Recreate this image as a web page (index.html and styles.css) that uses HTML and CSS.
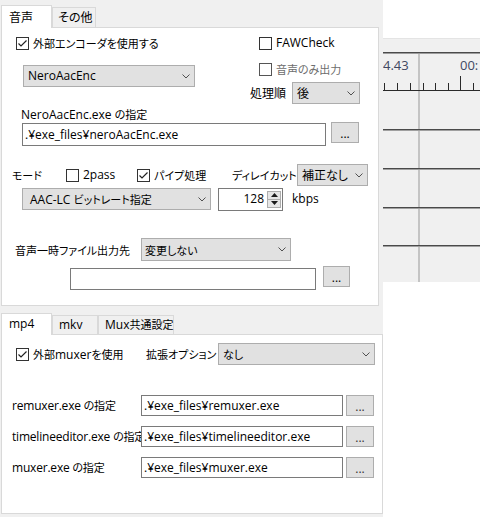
FILE: index.html
```html
<!DOCTYPE html>
<html lang="ja">
<head>
<meta charset="utf-8">
<title>音声設定</title>
<link rel="stylesheet" href="styles.css">
</head>
<body>
<div class="app">
  <div class="left">
    <div class="tabbar top">
      <div class="tab active w51"><span class="ja">音声</span></div>
      <div class="tab w44"><span class="ja">その他</span></div>
    </div>
    <div class="page audio">
      <div class="upper">
        <div class="ucol-l">
          <div class="chk use-enc"><span class="box"><svg viewBox="0 0 11 11" width="11" height="11"><path d="M1.5 5.5 L4 8 L9.5 2.5"/></svg></span><span class="ja">外部エンコーダを使用する</span></div>
          <div class="select enc"><span>NeroAacEnc</span><svg class="chev" width="8" height="5" viewBox="0 0 8 5"><path d="M0.5 0.5 L4 4 L7.5 0.5"/></svg></div>
          <div class="lbl path-lbl">NeroAacEnc.exe <span class="ja">の指定</span></div>
        </div>
        <div class="ucol-r">
          <div class="chk faw"><span class="box"></span><span>FAWCheck</span></div>
          <div class="chk only disabled"><span class="box"></span><span class="ja">音声のみ出力</span></div>
          <div class="order"><span class="lbl-order ja">処理順</span><div class="select ord"><span class="ja">後</span><svg class="chev" width="8" height="5" viewBox="0 0 8 5"><path d="M0.5 0.5 L4 4 L7.5 0.5"/></svg></div></div>
        </div>
      </div>
      <div class="path-row">
        <div class="input enc-path">.¥exe_files¥neroAacEnc.exe</div>
        <div class="btn">...</div>
      </div>
      <div class="mode-row">
        <span class="lbl-mode ja">モード</span>
        <div class="chk c-2pass"><span class="box"></span><span>2pass</span></div>
        <div class="chk c-pipe"><span class="box"><svg viewBox="0 0 11 11" width="11" height="11"><path d="M1.5 5.5 L4 8 L9.5 2.5"/></svg></span><span class="ja">パイプ処理</span></div>
        <span class="lbl-delay ja">ディレイカット</span>
        <div class="select delay"><span class="ja">補正なし</span><svg class="chev" width="8" height="5" viewBox="0 0 8 5"><path d="M0.5 0.5 L4 4 L7.5 0.5"/></svg></div>
      </div>
      <div class="rate-row">
        <div class="select mode"><span>AAC-LC <span class="ja">ビットレート指定</span></span><svg class="chev" width="8" height="5" viewBox="0 0 8 5"><path d="M0.5 0.5 L4 4 L7.5 0.5"/></svg></div>
        <div class="spin"><span class="val">128</span><div class="spinbtns"><div class="sb"><svg width="7" height="4" viewBox="0 0 7 4"><path d="M0 4 L3.5 0 L7 4 Z"/></svg></div><div class="sb"><svg width="7" height="4" viewBox="0 0 7 4"><path d="M0 0 L3.5 4 L7 0 Z"/></svg></div></div></div>
        <span class="kbps">kbps</span>
      </div>
      <div class="tmp-row">
        <span class="lbl-tmp ja">音声一時ファイル出力先</span>
        <div class="select tmp"><span class="ja">変更しない</span><svg class="chev" width="8" height="5" viewBox="0 0 8 5"><path d="M0.5 0.5 L4 4 L7.5 0.5"/></svg></div>
      </div>
      <div class="tmp-path-row">
        <div class="input tmp-path"></div>
        <div class="btn">...</div>
      </div>
    </div>

    <div class="tabbar bottom">
      <div class="tab active w51">mp4</div>
      <div class="tab w46">mkv</div>
      <div class="tab w76">Mux<span class="ja">共通設定</span></div>
    </div>
    <div class="page mux">
      <div class="mux-opt-row">
        <div class="chk use-mux"><span class="box"><svg viewBox="0 0 11 11" width="11" height="11"><path d="M1.5 5.5 L4 8 L9.5 2.5"/></svg></span><span><span class="ja">外部</span>muxer<span class="ja">を使用</span></span></div>
        <span class="lbl-ext ja">拡張オプション</span>
        <div class="select ext"><span class="ja">なし</span><svg class="chev" width="8" height="5" viewBox="0 0 8 5"><path d="M0.5 0.5 L4 4 L7.5 0.5"/></svg></div>
      </div>
      <div class="exe-row first">
        <span class="lbl-exe">remuxer.exe <span class="ja">の指定</span></span>
        <div class="input exe">.¥exe_files¥remuxer.exe</div>
        <div class="btn light">...</div>
      </div>
      <div class="exe-row">
        <span class="lbl-exe">timelineeditor.exe <span class="ja">の指定</span></span>
        <div class="input exe">.¥exe_files¥timelineeditor.exe</div>
        <div class="btn light">...</div>
      </div>
      <div class="exe-row">
        <span class="lbl-exe">muxer.exe <span class="ja">の指定</span></span>
        <div class="input exe">.¥exe_files¥muxer.exe</div>
        <div class="btn light">...</div>
      </div>
    </div>
  </div>

  <div class="timeline">
    <svg class="tl" width="97" height="244" viewBox="0 0 97 244">
      <rect x="0" y="0" width="97" height="244" fill="#f0f0f0"/>
      <rect x="0" y="0" width="97" height="1" fill="#e4e4e4"/>
      <rect x="35" y="15" width="2" height="229" fill="#c4c4c4"/>
      <rect x="0" y="14" width="97" height="1" fill="#4a4a4a"/>
      <rect x="0" y="15" width="97" height="1" fill="#9c9c9c"/>
      <text class="tl-t" x="0" y="32">4.43</text>
      <text class="tl-t" x="77" y="32">00:</text>
      <rect x="0" y="52" width="97" height="1" fill="#2a2a2a"/>
      <rect x="1" y="45" width="1" height="8" fill="#2a2a2a"/>
      <rect x="14" y="45" width="1" height="8" fill="#2a2a2a"/>
      <rect x="27" y="45" width="1" height="8" fill="#2a2a2a"/>
      <rect x="40" y="45" width="1" height="8" fill="#2a2a2a"/>
      <rect x="52" y="45" width="1" height="8" fill="#2a2a2a"/>
      <rect x="65" y="45" width="1" height="8" fill="#2a2a2a"/>
      <rect x="77" y="38" width="1" height="15" fill="#2a2a2a"/>
      <rect x="90" y="45" width="1" height="8" fill="#2a2a2a"/>
      <rect x="0" y="91" width="97" height="1" fill="#4a4a4a"/>
      <rect x="0" y="92" width="97" height="1" fill="#a0a0a0"/>
      <rect x="0" y="130" width="97" height="1" fill="#4a4a4a"/>
      <rect x="0" y="131" width="97" height="1" fill="#a0a0a0"/>
      <rect x="0" y="169" width="97" height="1" fill="#4a4a4a"/>
      <rect x="0" y="170" width="97" height="1" fill="#a0a0a0"/>
      <rect x="0" y="207" width="97" height="1" fill="#4a4a4a"/>
      <rect x="0" y="208" width="97" height="1" fill="#a0a0a0"/>
    </svg>
  </div>
</div>
</body>
</html>
```
FILE: styles.css
```css
* { box-sizing: border-box; }
html, body { margin: 0; padding: 0; }
body {
  width: 480px;
  height: 517px;
  overflow: hidden;
  background: #fff;
  color: #000;
  font-family: "Open Sans", "Noto Sans CJK JP", sans-serif;
  font-size: 12px;
  line-height: 16px;
  font-feature-settings: "palt";
}
.ja {
  font-family: "Noto Sans CJK JP", sans-serif;
  font-size: 11px;
}
.app {
  display: grid;
  grid-template-columns: 383px 97px;
  height: 517px;
}
.left {
  background: #f0f0f0;
  padding-top: 5px;
}

/* tabs */
.tabbar {
  display: flex;
  align-items: flex-end;
  height: 22px;
  padding-left: 1px;
}
.tabbar.bottom { height: 21px; margin-top: 7px; }
.tab {
  height: 20px;
  border: 1px solid #d9d9d9;
  border-bottom: none;
  background: #f0f0f0;
  line-height: 18px;
  padding-left: 5px;
  white-space: nowrap;
}
.tab .ja { font-size: 12px; }
.tab.active {
  height: 23px;
  background: #fff;
  margin-bottom: -1px;
  position: relative;
  z-index: 1;
  padding-left: 7px;
  line-height: 21px;
}
.bottom .tab { height: 19px; line-height: 17px; padding-left: 6px; }
.bottom .tab .ja { font-size: 11px; }
.bottom .tab.active { height: 22px; line-height: 20px; padding-left: 7px; }
.w51 { width: 51px; }
.w44 { width: 44px; }
.w46 { width: 46px; }
.w76 { width: 76px; }

.page {
  background: #fff;
  border: 1px solid #d9d9d9;
  margin-left: 1px;
}
.page.audio { width: 378px; height: 279px; }
.page.mux { width: 382px; height: 180px; }

/* common controls */
.chk {
  display: flex;
  align-items: center;
  height: 16px;
  white-space: nowrap;
}
.box {
  width: 13px;
  height: 13px;
  border: 1px solid #333;
  background: #fff;
  margin-right: 4px;
  flex: none;
  display: flex;
  align-items: center;
  justify-content: center;
}
.box svg path { fill: none; stroke: #222; stroke-width: 1.2; }
.chk.disabled { color: #6d6d6d; }
.chk.disabled .box { border-color: #555; }

.select {
  display: flex;
  align-items: center;
  justify-content: space-between;
  background: #e1e1e1;
  border: 1px solid #adadad;
  padding: 0 4px 0 4px;
  white-space: nowrap;
  flex: none;
}
.chev { flex: none; }
.chev path { fill: none; stroke: #505050; stroke-width: 1; }

.input {
  display: flex;
  align-items: center;
  background: #fff;
  border: 1px solid #7a7a7a;
  padding-left: 2px;
  white-space: nowrap;
  overflow: hidden;
  flex: none;
}
.btn {
  display: flex;
  align-items: center;
  justify-content: center;
  background: #e1e1e1;
  border: 1px solid #adadad;
  flex: none;
  padding-top: 2px;
}
.btn.light { color: #333; }

/* audio page */
.upper { display: flex; height: 94px; }
.ucol-l {
  width: 236px;
  display: flex;
  flex-direction: column;
  align-items: flex-start;
}
.ucol-r {
  display: flex;
  flex-direction: column;
  align-items: flex-start;
}
.use-enc { margin: 7px 0 0 14px; }
.select.enc { margin: 14px 0 0 21px; width: 172px; height: 22px; }
.path-lbl { margin: 19px 0 0 19px; height: 16px; white-space: nowrap; }
.faw { margin: 7px 0 0 21px; }
.only { margin: 10px 0 0 21px; }
.order {
  display: flex;
  align-items: center;
  margin: 5px 0 0 12px;
}
.lbl-order { width: 42px; font-size: 12px; }
.select.ord { width: 68px; height: 22px; }
.select.ord .ja { font-size: 12px; }

.path-row { display: flex; align-items: flex-start; height: 24px; }
.enc-path { margin: 1px 0 0 20px; width: 304px; height: 23px; }
.path-row .btn { margin-left: 5px; width: 28px; height: 21px; }

.mode-row {
  display: flex;
  align-items: center;
  height: 22px;
  margin-top: 18px;
}
.lbl-mode { margin-left: 10px; width: 54px; }
.c-2pass { width: 71px; }
.c-pipe { width: 95px; }
.lbl-delay { width: 65px; white-space: nowrap; }
.select.delay { width: 71px; height: 22px; }
.select.delay .ja { font-size: 12px; }

.rate-row {
  display: flex;
  align-items: center;
  height: 24px;
  margin-top: 1px;
}
.select.mode { margin-left: 20px; width: 189px; height: 22px; padding-left: 7px; }
.spin {
  display: flex;
  align-items: center;
  justify-content: flex-end;
  margin-left: 7px;
  width: 65px;
  height: 23px;
  border: 1px solid #7a7a7a;
  background: #fff;
  padding-right: 1px;
}
.val { margin-right: 3px; }
.spinbtns {
  width: 14px;
  height: 17px;
  display: flex;
  flex-direction: column;
}
.sb {
  flex: 1;
  display: flex;
  align-items: center;
  justify-content: center;
  background: #e6e6e6;
  border: 1px solid #adadad;
}
.sb + .sb { border-top: none; }
.sb svg path { fill: #1a1a1a; }
.kbps { margin-left: 9px; }

.tmp-row {
  display: flex;
  align-items: center;
  height: 23px;
  margin-top: 27px;
}
.lbl-tmp { margin-left: 13px; width: 126px; white-space: nowrap; }
.select.tmp { width: 150px; height: 23px; padding-left: 3px; }

.tmp-path-row { display: flex; align-items: flex-start; margin-top: 5px; }
.tmp-path { margin: 2px 0 0 68px; width: 246px; height: 22px; }
.tmp-path-row .btn { margin-left: 7px; width: 27px; height: 21px; }

/* mux page */
.mux-opt-row {
  display: flex;
  align-items: center;
  height: 22px;
  margin-top: 8px;
}
.use-mux { margin-left: 14px; width: 130px; }
.lbl-ext { width: 72px; white-space: nowrap; }
.select.ext { width: 157px; height: 22px; }

.exe-row {
  display: flex;
  align-items: center;
  height: 21px;
  margin-top: 10px;
}
.exe-row.first { margin-top: 30px; }
.lbl-exe { margin-left: 10px; width: 129px; white-space: nowrap; letter-spacing: -0.2px; }
.input.exe { width: 202px; height: 21px; }
.exe-row .btn { margin-left: 3px; width: 28px; height: 21px; }

/* timeline */
.timeline { padding-top: 38px; }
.tl { display: block; }
.tl-t {
  font-family: "Open Sans", sans-serif;
  font-size: 13px;
  fill: #404862;
}
```
